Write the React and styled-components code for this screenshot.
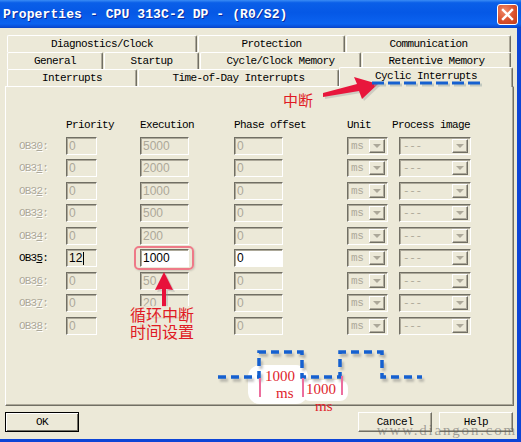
import styled, { createGlobalStyle } from "styled-components";

const BEIGE = "#ECE9D8";
const SHADE = "#716F64";
const LIGHTSHADE = "#ACA899";
const XP_BLUE = "#0D45D6";
const RED = "#E01A24";

const GlobalStyle = createGlobalStyle`
  html, body { margin: 0; padding: 0; background: ${BEIGE}; }
  body { width: 521px; height: 442px; overflow: hidden; }
  * { box-sizing: border-box; }
`;

const tabRows = [
  [["Diagnostics/Clock", 190], ["Protection", 147], ["Communication", 165]],
  [["General", 96], ["Startup", 95], ["Cycle/Clock Memory", 161], ["Retentive Memory", 149]],
  [["Interrupts", 130], ["Time-of-Day Interrupts", 201], ["Cyclic Interrupts", 174, true]],
];

const obRows = [
  { ob: "30", prio: "0", exec: "5000" },
  { ob: "31", prio: "0", exec: "2000" },
  { ob: "32", prio: "0", exec: "1000" },
  { ob: "33", prio: "0", exec: "500" },
  { ob: "34", prio: "0", exec: "200" },
  { ob: "35", prio: "12", exec: "1000", active: true },
  { ob: "36", prio: "0", exec: "50" },
  { ob: "37", prio: "0", exec: "20" },
  { ob: "38", prio: "0", exec: "10" },
];

export default function App() {
  return (
    <Window>
      <GlobalStyle />
      <TitleBar>
        <Title>Properties - CPU 313C-2 DP - (R0/S2)</Title>
        <CloseButton>
          <svg width="13" height="13" viewBox="0 0 13 13">
            <path d="M2 2 L11 11 M11 2 L2 11" stroke="#fff" strokeWidth="2.4" strokeLinecap="square" />
          </svg>
        </CloseButton>
      </TitleBar>

      <Body>
        <TabStrip>
          {tabRows.map((row, i) => (
            <TabRow key={i}>
              {row.map(([label, width, selected]) => (
                <Tab key={label} $width={width} $selected={selected}>
                  {label}
                </Tab>
              ))}
            </TabRow>
          ))}
        </TabStrip>

        <Panel>
          <Table>
            <span />
            <Header>Priority</Header>
            <Header>Execution</Header>
            <Header>Phase offset</Header>
            <Header>Unit</Header>
            <Header $shift={-7}>Process image</Header>

            {obRows.map((r) => (
              <Row key={r.ob}>
                <ObLabel $active={r.active}>
                  OB3<u>{r.ob[1]}</u>:
                </ObLabel>
                <Field $w={31} $active={r.active} $tint={r.active ? "beige" : null}>
                  {r.prio}
                  {r.active && <Caret />}
                </Field>
                <Field $w={49} $active={r.active}>{r.exec}</Field>
                <Field $w={49} $active={r.active}>0</Field>
                <Combo $w={41}>
                  <ComboText>ms</ComboText>
                  <DropButton><Triangle /></DropButton>
                </Combo>
                <Combo $w={72}>
                  <ComboText>---</ComboText>
                  <DropButton><Triangle /></DropButton>
                </Combo>
              </Row>
            ))}
          </Table>

          <TabNote>中断</TabNote>
          <Overlay $left={312} $top={-15}>
            <svg width="67" height="30" viewBox="0 0 67 30">
              <polygon points="7,24 41,15 38,7 62,14 46,29 43,21 7,27" fill="#999" opacity="0.35" />
              <polygon points="5,21 39,12 36,5 60,12 44,27 41,19 5,25" fill="#E8163C" />
            </svg>
          </Overlay>
          <Overlay $left={366} $top={-7}>
            <svg width="112" height="8" viewBox="0 0 112 8">
              <line x1="2" y1="5" x2="110" y2="5" stroke="#9aa" strokeWidth="3" strokeDasharray="12 4" opacity="0.5" />
              <line x1="0" y1="3" x2="108" y2="3" stroke="#1560D0" strokeWidth="3" strokeDasharray="12 4" />
            </svg>
          </Overlay>

          <Highlight />
          <Overlay $left={144} $top={183}>
            <svg width="28" height="40" viewBox="0 0 28 40">
              <polygon points="16,4 25,22 18,21 18,39 14,39 14,21 7,22" fill="#999" opacity="0.35" />
              <polygon points="14,2 23,20 16,19 16,37 12,37 12,19 5,20" fill="#E8103A" />
            </svg>
          </Overlay>
          <Callout>
            循环中断
            <br />
            时间设置
          </Callout>

          <Overlay $left={204} $top={258}>
            <svg width="220" height="72" viewBox="0 0 220 72">
              <defs>
                <filter id="soft" x="-10%" y="-30%" width="120%" height="160%">
                  <feGaussianBlur stdDeviation="1.2" />
                </filter>
              </defs>
              <rect x="38" y="20" width="60" height="39" rx="12" fill="#fff" />
              <rect x="92" y="35" width="46" height="21" rx="8" fill="#fff" />
              <path
                d="M10,35 H51 V10 H94 V35 H132 V10 H174 V35 H214"
                fill="none" stroke="#777" strokeWidth="3.5" strokeDasharray="8 5"
                opacity="0.45" filter="url(#soft)"
              />
              <path
                d="M8,32 H49 V7 H92 V32 H130 V7 H172 V32 H212"
                fill="none" stroke="#1560D0" strokeWidth="3.5" strokeDasharray="8 5"
              />
              <line x1="50" y1="33" x2="50" y2="52" stroke="#EC6E9E" strokeWidth="2" />
              <line x1="93" y1="33" x2="93" y2="52" stroke="#EC6E9E" strokeWidth="2" />
              <line x1="132" y1="31" x2="132" y2="50" stroke="#EC6E9E" strokeWidth="2" />
              <WaveText x="55" y="36">1000</WaveText>
              <WaveText x="66" y="53">ms</WaveText>
              <WaveText x="96" y="49">1000</WaveText>
              <WaveText x="105" y="66">ms</WaveText>
            </svg>
          </Overlay>
        </Panel>

        <ButtonBar>
          <Button $default>OK</Button>
          <RightButtons>
            <Button>Cancel</Button>
            <Button>Help</Button>
          </RightButtons>
        </ButtonBar>
      </Body>

      <Watermark>www.diangon.com</Watermark>
    </Window>
  );
}

const Window = styled.div`
  position: relative;
  width: 521px;
  height: 442px;
  display: flex;
  flex-direction: column;
  background: ${BEIGE};
  font-family: "Liberation Mono", "DejaVu Sans Mono", monospace;
  overflow: hidden;
`;

const TitleBar = styled.div`
  height: 28px;
  flex: none;
  display: flex;
  align-items: center;
  justify-content: space-between;
  padding: 0 3px 0 3px;
  background: linear-gradient(
    to bottom,
    #3a8cf5 0%,
    #0a5fe8 10%,
    #0558e6 45%,
    #0b63f0 85%,
    #0a4fd8 95%,
    #0843c4 100%
  );
`;

const Title = styled.div`
  color: #fff;
  font-family: "Liberation Mono", monospace;
  font-weight: bold;
  font-size: 13px;
  letter-spacing: 0.1px;
  text-shadow: 1px 1px #0a2a9c;
  white-space: pre;
`;

const CloseButton = styled.div`
  width: 21px;
  height: 21px;
  border: 1px solid #fff;
  border-radius: 3px;
  background: radial-gradient(circle at 35% 30%, #f08a6a, #d9502c 55%, #c23c18);
  display: flex;
  align-items: center;
  justify-content: center;
`;

const Body = styled.div`
  flex: 1;
  display: flex;
  flex-direction: column;
  padding: 7px 3px 0 5px;
  border-right: 4px solid ${XP_BLUE};
  border-bottom: 3px solid ${XP_BLUE};
`;

const TabStrip = styled.div`
  display: flex;
  flex-direction: column;
`;

const TabRow = styled.div`
  display: flex;
  align-items: flex-end;
  gap: 1px;
  height: 17px;
  padding-left: 2px;
`;

const Tab = styled.div`
  position: relative;
  z-index: ${(p) => (p.$selected ? 2 : 0)};
  width: ${(p) => p.$width}px;
  height: ${(p) => (p.$selected ? 20 : 17)}px;
  margin-bottom: ${(p) => (p.$selected ? -1 : 0)}px;
  margin-left: ${(p) => (p.$selected ? -1 : 0)}px;
  display: flex;
  align-items: center;
  justify-content: center;
  padding-bottom: ${(p) => (p.$selected ? 3 : 0)}px;
  background: ${BEIGE};
  border-top: 1px solid #fff;
  border-left: 1px solid #fff;
  border-right: 1px solid ${SHADE};
  box-shadow: inset -1px 0 ${LIGHTSHADE};
  border-radius: 2px 2px 0 0;
  font-size: 11px;
  letter-spacing: -0.6px;
  color: #000;
  white-space: pre;
`;

const Panel = styled.div`
  position: relative;
  height: 320px;
  flex: none;
  border-top: 1px solid #fff;
  border-left: 1px solid #fff;
  border-right: 1px solid ${SHADE};
  border-bottom: 1px solid ${SHADE};
  box-shadow: inset -1px -1px ${LIGHTSHADE};
`;

const Table = styled.div`
  display: grid;
  grid-template-columns: 47px 74px 94px 113px 52px 72px;
  grid-template-rows: 14px;
  grid-auto-rows: 18px;
  row-gap: 4.5px;
  padding: 31px 0 0 13px;
  & > :nth-child(6) + * {
    margin-top: 1.5px;
  }
`;

const Header = styled.div`
  font-size: 11px;
  letter-spacing: -0.6px;
  line-height: 14px;
  color: #000;
  margin-left: ${(p) => p.$shift || 0}px;
  white-space: pre;
`;

const Row = styled.div`
  display: contents;
`;

const ObLabel = styled.div`
  align-self: center;
  font-size: 11px;
  letter-spacing: -0.8px;
  color: ${(p) => (p.$active ? "#000" : LIGHTSHADE)};
  text-shadow: ${(p) => (p.$active ? "none" : "1px 1px #fff")};
  u {
    text-underline-offset: 1px;
  }
`;

const Field = styled.div`
  width: ${(p) => p.$w}px;
  height: 18px;
  display: flex;
  align-items: center;
  padding-left: 2px;
  background: ${(p) => (p.$active && !p.$tint ? "#fff" : BEIGE)};
  border-top: 1px solid ${SHADE};
  border-left: 1px solid ${SHADE};
  border-right: 1px solid #fff;
  border-bottom: 1px solid #fff;
  box-shadow: inset 1px 1px ${LIGHTSHADE};
  font-family: "Liberation Sans", Arial, sans-serif;
  font-size: 12px;
  color: ${(p) => (p.$active ? "#000" : LIGHTSHADE)};
`;

const Caret = styled.span`
  display: inline-block;
  width: 1px;
  height: 13px;
  margin-left: 1px;
  background: #000;
`;

const Combo = styled.div`
  width: ${(p) => p.$w}px;
  height: 18px;
  display: flex;
  align-items: center;
  justify-content: space-between;
  padding: 1px 2px 1px 3px;
  background: ${BEIGE};
  border-top: 1px solid ${SHADE};
  border-left: 1px solid ${SHADE};
  border-right: 1px solid #fff;
  border-bottom: 1px solid #fff;
  box-shadow: inset 1px 1px ${LIGHTSHADE}, inset -1px -1px ${BEIGE};
`;

const ComboText = styled.span`
  font-size: 11px;
  letter-spacing: -0.4px;
  color: ${LIGHTSHADE};
`;

const DropButton = styled.div`
  width: 16px;
  height: 14px;
  display: flex;
  align-items: center;
  justify-content: center;
  background: ${BEIGE};
  border-top: 1px solid #fff;
  border-left: 1px solid #fff;
  border-right: 1px solid ${SHADE};
  border-bottom: 1px solid ${SHADE};
  box-shadow: inset -1px -1px ${LIGHTSHADE};
`;

const Triangle = styled.span`
  width: 0;
  height: 0;
  border-left: 4px solid transparent;
  border-right: 4px solid transparent;
  border-top: 4px solid ${LIGHTSHADE};
`;

const Overlay = styled.div`
  position: absolute;
  z-index: 5;
  left: ${(p) => p.$left}px;
  top: ${(p) => p.$top}px;
  line-height: 0;
  pointer-events: none;
`;

const TabNote = styled.div`
  position: absolute;
  z-index: 5;
  left: 277px;
  top: 4px;
  font-family: "Noto Sans CJK SC", sans-serif;
  font-size: 15px;
  line-height: 17px;
  color: ${RED};
`;

const Highlight = styled.div`
  position: absolute;
  z-index: 5;
  left: 128px;
  top: 159px;
  width: 60px;
  height: 24px;
  border: 2px solid #EE7A88;
  border-radius: 5px;
  box-shadow: 1px 1px 2px rgba(0, 0, 0, 0.15);
`;

const Callout = styled.div`
  position: absolute;
  z-index: 5;
  left: 123px;
  top: 219px;
  padding: 0 1px;
  font-family: "Noto Sans CJK SC", sans-serif;
  font-size: 16px;
  line-height: 17px;
  color: ${RED};
  background: rgba(236, 233, 216, 0.85);
`;

const WaveText = styled.text`
  font-family: "Liberation Serif", serif;
  font-size: 15px;
  fill: #E0242C;
`;

const ButtonBar = styled.div`
  display: flex;
  justify-content: space-between;
  margin-top: 6px;
`;

const RightButtons = styled.div`
  display: flex;
  gap: 7px;
  margin-right: 1px;
`;

const Button = styled.div`
  width: 74px;
  height: 20px;
  display: flex;
  align-items: center;
  justify-content: center;
  background: ${BEIGE};
  border: 1px solid ${(p) => (p.$default ? "#000" : "#fff")};
  border-right-color: ${(p) => (p.$default ? "#000" : SHADE)};
  border-bottom-color: ${(p) => (p.$default ? "#000" : SHADE)};
  box-shadow: ${(p) =>
    p.$default
      ? `inset 1px 1px #fff, inset -1px -1px ${SHADE}`
      : `inset -1px -1px ${LIGHTSHADE}`};
  font-size: 11px;
  letter-spacing: -0.5px;
  color: #000;
`;

const Watermark = styled.div`
  position: absolute;
  right: 4px;
  bottom: 4px;
  font-family: "Liberation Serif", serif;
  font-size: 15px;
  letter-spacing: 1.8px;
  line-height: 15px;
  color: rgba(95, 95, 95, 0.55);
  pointer-events: none;
`;
